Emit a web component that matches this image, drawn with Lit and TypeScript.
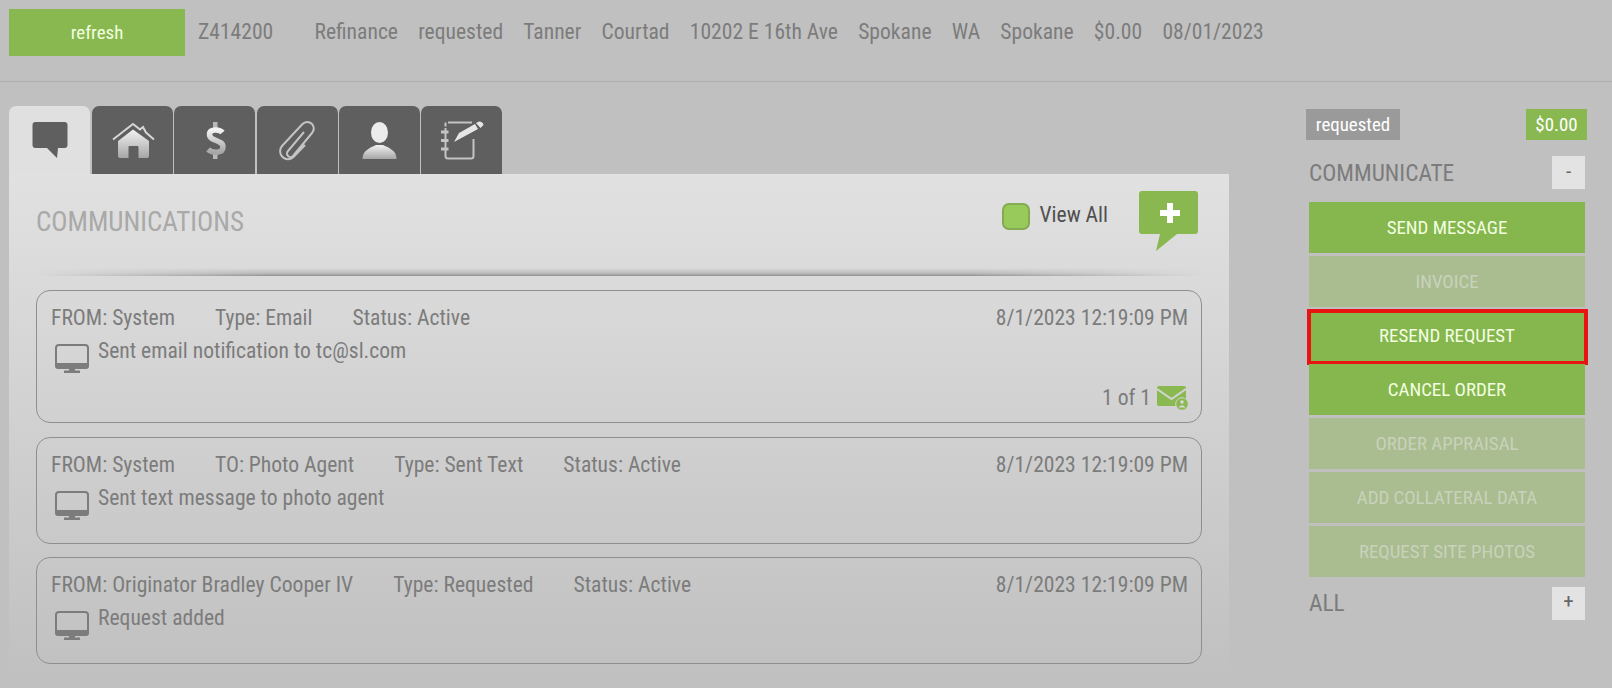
import { LitElement, html, css, svg } from "lit";
import { customElement } from "lit/decorators.js";

const fields = ["Refinance","requested","Tanner","Courtad","10202 E 16th Ave","Spokane","WA","Spokane","$0.00","08/01/2023"];

const defs = svg`<defs><linearGradient id="ig" x1="0" y1="0" x2="0" y2="1"><stop offset="0" stop-color="#f2f2f2"/><stop offset="1" stop-color="#a6a6a6"/></linearGradient></defs>`;
const tabIcons = [
  svg`<path d="M7.500 2h29q3 0 3 3v20q0 3-3 3H30l-1 10-10-10H7.500q-3 0-3-3V5q0-3 3-3z" fill="#5f5f5f"/>`,
  svg`<path d="M2 19.500 22 4l7 5.500 3-2.500 3 5.500 8 7" fill="none" stroke="#d6d6d6" stroke-width="2"/><path d="M7 21 22 9.500 38 21v15q0 2-2 2h-8.500V27q0-1-1-1h-8q-1 0-1 1v11H9q-2 0-2-2z" fill="url(#ig)"/>`,
  svg`<path d="M20 2h4.500v6H20zM20 33h4.500v6H20z" fill="#b8b8b8"/><path d="M29.500 12.500C26.500 9 16.500 8.500 16.500 14.500c0 7 13.500 5 13.500 12.500 0 6.500-10.500 6.500-15 2.500" fill="none" stroke="url(#ig)" stroke-width="5.500"/>`,
  svg`<path d="M29 12 13 31a3.500 3.500 0 0 0 5 5L37 13a6.500 6.500 0 0 0-9.500-9L7 26a8 8 0 0 0 11 11.500L30 25" fill="none" stroke="#c4c4c4" stroke-width="2"/>`,
  svg`<ellipse cx="22.500" cy="12.500" rx="8.500" ry="10.500" fill="#ececec"/><path d="M5.500 39C5.500 31 12 28 19 25h7c7 3 13.500 6 13.500 14z" fill="url(#ig)"/>`,
  svg`<path d="M8 2.500h24M5.500 8V36q0 2.500 2.500 2.500h23q2.500 0 2.500-2.500V19" fill="none" stroke="#c4c4c4" stroke-width="2"/><path d="M5.500 2.500v4" stroke="#c4c4c4" stroke-width="2"/><path d="M1 10.500h7.500v3H1zM1 19h7.500v3H1zM1 27.500h7.500v3H1z" fill="#c4c4c4"/><path d="M14 22 19 13 35 4l3 5zM36 3l3-1.500q4 0 4.500 3.500l-3 3z" fill="#e6e6e6"/>`,
];

@customElement("comm-card")
class CommCard extends LitElement {
  static properties = { meta: { type: Array }, body: {}, tall: { type: Boolean } };
  meta: string[] = [];
  body = "";
  tall = false;
  static styles = css`
    :host { display: block; }
    .card { border: 1px solid #8f8f8f; border-radius: 14px; padding: 14px 13px 0 14px; box-sizing: border-box; color: #7c7c7c; height: 107px; font-family: Roboto, sans-serif; font-stretch: 75%; font-size: 21.6px; }
    .card.tall { height: 133px; }
    .head { display: flex; justify-content: space-between; line-height: 26px; }
    .metas { display: flex; gap: 40px; }
    .body { display: flex; margin-top: 7px; line-height: 26px; }
    .body svg { margin: 6px 9px 0 4px; flex: none; }
    .foot { display: flex; justify-content: flex-end; align-items: center; gap: 6px; margin-top: 12px; margin-right: -1px; }
  `;
  render() {
    return html`<div class="card ${this.tall ? "tall" : ""}">
      <div class="head"><div class="metas">${this.meta.map((m) => html`<span>${m}</span>`)}</div><span>8/1/2023 12:19:09 PM</span></div>
      <div class="body"><svg width="34" height="29" viewBox="0 0 34 29"><rect x="1" y="1" width="32" height="22" rx="3" fill="none" stroke="#7c7c7c" stroke-width="2"/><path d="M0 19h34v3q0 3-3 3H3q-3 0-3-3z" fill="#7c7c7c"/><path d="M14 25h6v1.500h5V29H9v-2.500h5z" fill="#7c7c7c"/></svg><span>${this.body}</span></div>
      ${this.tall ? html`<div class="foot"><span>1 of 1</span><svg width="32" height="24" viewBox="0 0 32 24"><rect x="0" y="0" width="29" height="20" rx="2" fill="#8ab851"/><path d="M0 3 14.500 13 29 3" fill="none" stroke="#d4d4d4" stroke-width="2"/><circle cx="25" cy="18" r="6.300" fill="#8ab851" stroke="#d4d4d4"/><circle cx="25" cy="16" r="1.800" fill="#d8d8d8"/><path d="M21.500 21.500q3.500-4.500 7 0z" fill="#d8d8d8"/></svg></div>` : ""}
    </div>`;
  }
}

@customElement("app-root")
class AppRoot extends LitElement {
  static styles = css`
    :host { display: block; width: 1612px; height: 688px; overflow: hidden; background: #c0c0c0; font-family: Roboto, sans-serif; font-stretch: 75%; color: #7c7c7c; }
    .top { height: 82px; box-sizing: border-box; border-bottom: 1px solid #adadad; padding: 9px 0 0 9px; display: flex; }
    .refresh { width: 176px; height: 47px; background: #88b84f; color: #f2ffe0; font-size: 18.900px; font-weight: 450; display: flex; align-items: center; justify-content: center; }
    .fields { display: flex; font-size: 21.6px; line-height: 45px; margin-left: 13px; gap: 20.200px; white-space: nowrap; }
    .id { margin-right: 21px; }
    .main { display: flex; padding: 24px 0 0 9px; }
    .left { width: 1220px; flex: none; }
    .tabs { display: flex; height: 68px; gap: 1.250px; }
    .tab { width: 81px; background: #5f5f5f; border-radius: 7px 7px 0 0; display: flex; justify-content: center; padding-top: 14px; box-sizing: border-box; }
    .tab.on { background: #e0e0e0; margin-right: .750px; }
    .panel { height: 520px; background: linear-gradient(#e1e1e1, #bfbfbf); padding: 0 27px 0 27px; box-sizing: border-box; }
    .phead { height: 102px; display: flex; position: relative; }
    .ptitle { font-size: 27px; color: #a9a9a9; margin-top: 33px; line-height: 30px; }
    .va { margin-left: auto; display: flex; align-items: center; height: 27px; margin-top: 29px; color: #505050; font-size: 21.6px; }
    .chk { width: 28px; height: 27px; box-sizing: border-box; border-radius: 7px; background: #98ca5b; border: 2px solid #83ab52; margin-right: 9px; }
    .valbl { margin-right: 31px; line-height: 26px; padding-bottom: 3px; }
    .bubble { margin-top: 17px; margin-right: 4px; }
    .rule { position: absolute; left: 0; right: 0; bottom: 0; height: 8px; background: linear-gradient(to top, #909090 0, #bcbcbc 35%, transparent); -webkit-mask-image: linear-gradient(90deg, transparent, #000 20%, #000 80%, transparent); mask-image: linear-gradient(90deg, transparent, #000 20%, #000 80%, transparent); }
    .cards { display: flex; flex-direction: column; gap: 13.600px; margin-top: 14px; }
    .right { margin-left: 80px; width: 276px; flex: none; padding-top: 3px; }
    .badges { display: flex; justify-content: space-between; margin-left: -3px; margin-right: -2px; }
    .badge { height: 31px; font-size: 18.900px; font-weight: 450; color: #fff; display: flex; align-items: center; justify-content: center; box-sizing: border-box; }
    .b1 { width: 94px; background: #9a9a9a; }
    .b2 { width: 61px; background: #88b84f; }
    .sect { display: flex; justify-content: space-between; align-items: center; font-size: 23.400px; color: #7c7c7c; height: 33px; margin-top: 16px; }
    .tog { width: 33px; height: 33px; background: #e3e3e3; font-size: 21px; color: #666; display: flex; align-items: center; justify-content: center; padding-bottom: 4px; box-sizing: border-box; }
    .btns { display: flex; flex-direction: column; gap: 3px; margin-top: 13px; }
    .btn { height: 51px; background: #86b64e; color: #f2ffe0; font-size: 18.900px; font-weight: 450; display: flex; align-items: center; justify-content: center; box-sizing: border-box; position: relative; }
    .btn.off { background: #aabd91; color: #c8d2bb; }
    .btn.hl::after { content: ""; position: absolute; inset: -1px -3px -4px -2px; border: 4px solid #e81414; }
    .sect2 { margin-top: 10px; height: 32px; }
  `;
  render() {
    const btns: [string, string][] = [
      ["SEND MESSAGE",""],["INVOICE","off"],["RESEND REQUEST","hl"],["CANCEL ORDER",""],
      ["ORDER APPRAISAL","off"],["ADD COLLATERAL DATA","off"],["REQUEST SITE PHOTOS","off"],
    ];
    return html`
      <div class="top">
        <div class="refresh">refresh</div>
        <div class="fields"><span class="id">Z414200</span>
          ${fields.map((f) => html`<span>${f}</span>`)}
        </div>
      </div>
      <div class="main">
        <div class="left">
          <div class="tabs">
            ${tabIcons.map((ic, i) => html`<div class="tab ${i === 0 ? "on" : ""}"><svg width="44" height="44" viewBox="0 0 44 44">${defs}${ic}</svg></div>`)}
          </div>
          <div class="panel">
            <div class="phead">
              <div class="ptitle">COMMUNICATIONS</div>
              <div class="va"><div class="chk"></div><div class="valbl">View All</div></div>
              <svg class="bubble" width="59" height="60" viewBox="0 0 59 60"><path d="M0 3q0-3 3-3h53q3 0 3 3v37q0 3-3 3H38L17 60l4-17H3q-3 0-3-3z" fill="#88b84f"/><path d="M28 12h6v7h7v6h-7v7h-6v-7h-7v-6h7z" fill="#fff"/></svg>
              <div class="rule"></div>
            </div>
            <div class="cards">
              <comm-card tall .meta=${["FROM: System","Type: Email","Status: Active"]} body="Sent email notification to tc@sl.com"></comm-card>
              <comm-card .meta=${["FROM: System","TO: Photo Agent","Type: Sent Text","Status: Active"]} body="Sent text message to photo agent"></comm-card>
              <comm-card .meta=${["FROM: Originator Bradley Cooper IV","Type: Requested","Status: Active"]} body="Request added"></comm-card>
            </div>
          </div>
        </div>
        <div class="right">
          <div class="badges"><div class="badge b1">requested</div><div class="badge b2">$0.00</div></div>
          <div class="sect"><span>COMMUNICATE</span><div class="tog">-</div></div>
          <div class="btns">${btns.map(([l, c]) => html`<div class="btn ${c}">${l}</div>`)}</div>
          <div class="sect sect2"><span>ALL</span><div class="tog">+</div></div>
        </div>
      </div>`;
  }
}
